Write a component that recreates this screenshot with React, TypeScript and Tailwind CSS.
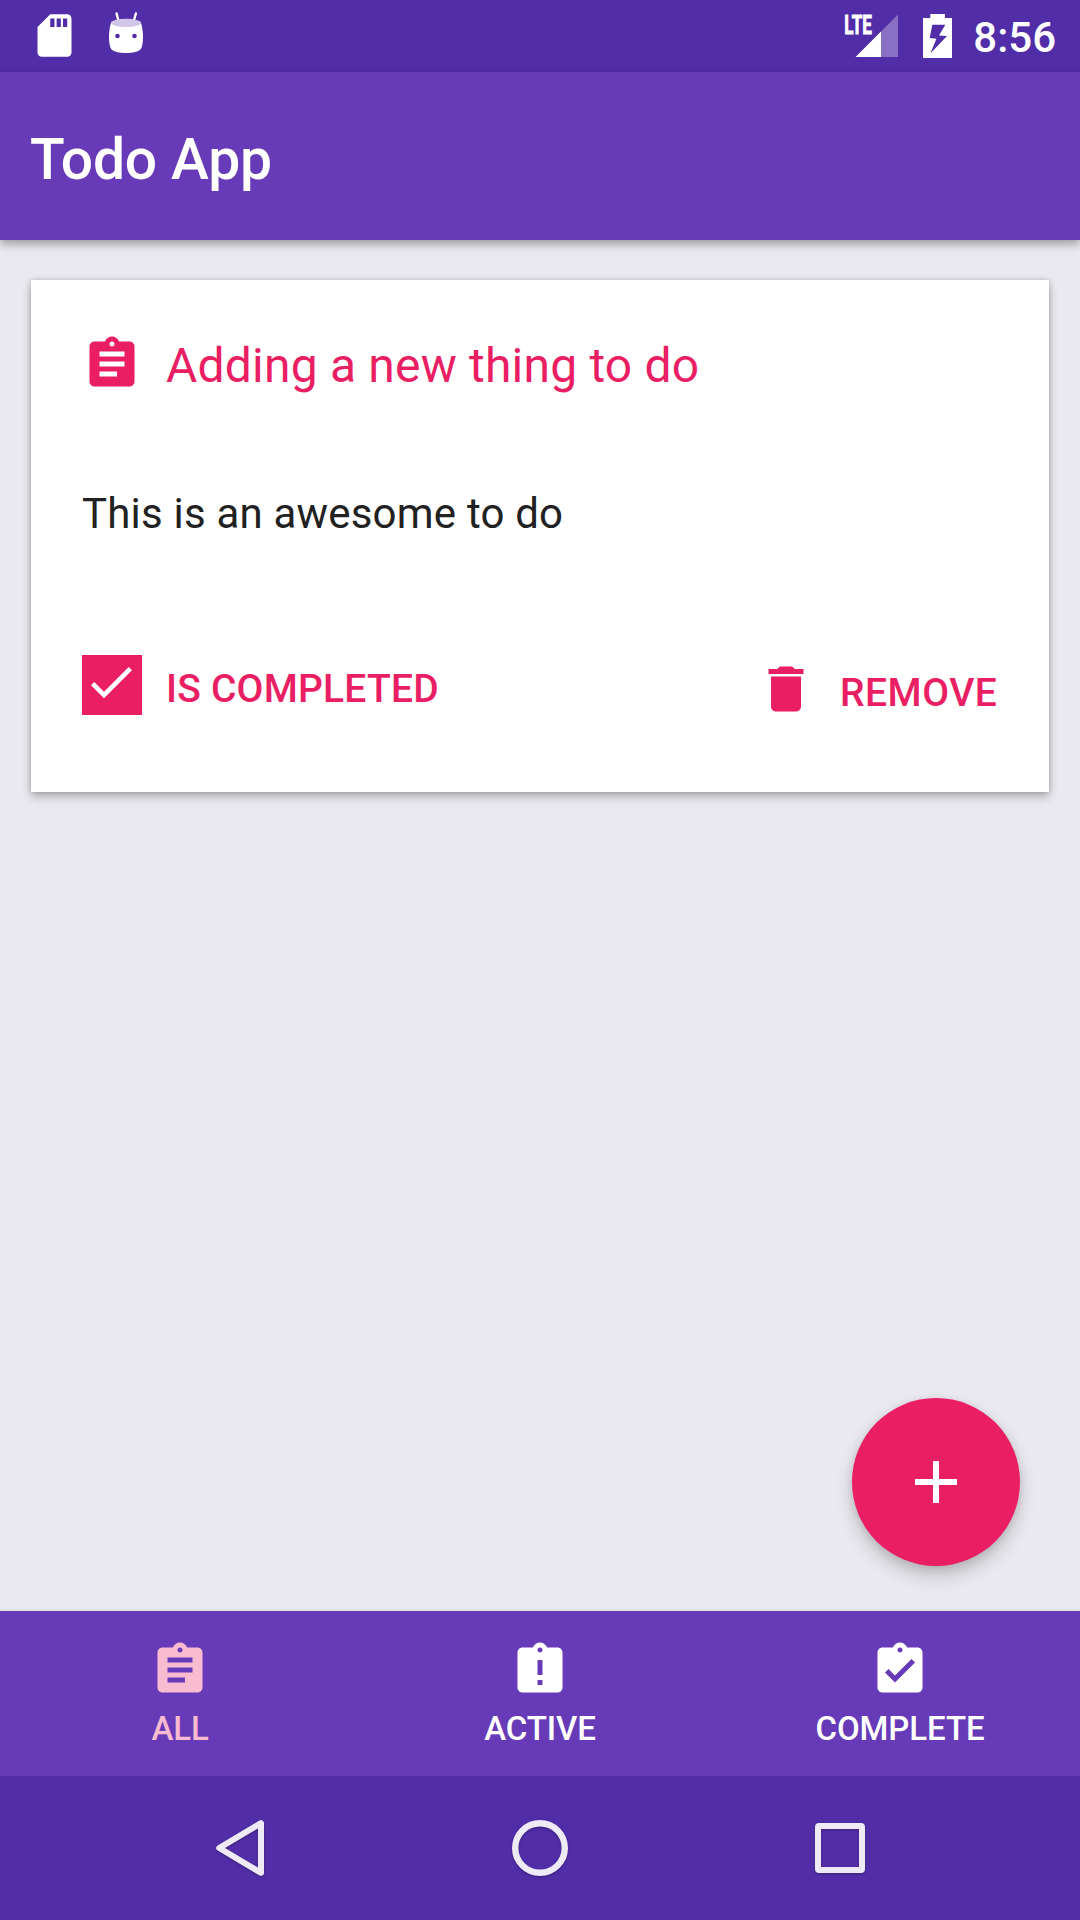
import type { ReactNode } from "react";
import {
  MdAdd,
  MdAssignment,
  MdAssignmentLate,
  MdAssignmentTurnedIn,
  MdCheck,
  MdDelete,
  MdSdStorage,
} from "react-icons/md";

function Bugdroid() {
  return (
    <svg width="36" height="44" viewBox="0 0 36 44" fill="none">
      <path d="M8.6 2.5 10.6 10.5M27.9 2.5 25.6 10.5" stroke="#fff" strokeWidth="2.4" strokeLinecap="round" />
      <path
        d="M3 12C2 15 1 20 1 25.5C1 31 1.7 36 3.2 38C5.5 40.8 11 42 18 42S30.5 40.8 32.8 38C34.3 36 35 31 35 25.5C35 20 34 15 33 12Z"
        fill="#fff"
      />
      <ellipse cx="18" cy="11.8" rx="15.2" ry="4.1" fill="#d1c6e8" />
      <circle cx="9.5" cy="25" r="2.3" fill="#512da8" />
      <circle cx="26.5" cy="25" r="2.3" fill="#512da8" />
    </svg>
  );
}

function Signal() {
  return (
    <svg className="overflow-visible" width="56" height="46" viewBox="0 0 56 46">
      <text
        x="0.3"
        y="21.5"
        fill="#fff"
        stroke="#fff"
        strokeWidth="0.9"
        fontFamily="Roboto, sans-serif"
        fontWeight="700"
        fontSize="25.5"
        textLength="27.5"
        lengthAdjust="spacingAndGlyphs"
      >
        LTE
      </text>
      <path d="M54 2.5V45H37V19.5Z" fill="#fff" fillOpacity="0.32" />
      <path d="M37 19.5V45H11.5Z" fill="#fff" />
    </svg>
  );
}

function Battery() {
  return (
    <svg width="29" height="44" viewBox="0 0 29 44">
      <path
        fillRule="evenodd"
        fill="#fff"
        d="M7.3 0H22V4H29V44H0V4H7.3ZM9.3 10.7 6.7 24 13.4 24.7 7.5 39.3 24 22 16 21.4 22.3 10.7Z"
      />
    </svg>
  );
}

function StatusBar() {
  return (
    <div className="flex h-[72px] shrink-0 items-start justify-between bg-[#512da8] pr-[24px] pl-[28.5px] text-white">
      <div className="flex gap-[28.5px]">
        <MdSdStorage className="mt-[10px] size-[51px]" />
        <div className="mt-[11px]">
          <Bugdroid />
        </div>
      </div>
      <div className="flex">
        <div className="mt-[12px] mr-[23px]">
          <Signal />
        </div>
        <div className="mt-[14px] mr-[21px]">
          <Battery />
        </div>
        <span className="mt-[2px] text-[42px] leading-[72px] font-medium">8:56</span>
      </div>
    </div>
  );
}

function Tab({ icon, label, active }: { icon: ReactNode; label: string; active?: boolean }) {
  return (
    <button
      className={
        active
          ? "flex flex-1 flex-col items-center pt-[29px] text-[#f8bbd0]"
          : "flex flex-1 flex-col items-center pt-[29px] text-white"
      }
    >
      {icon}
      <span className="mt-[9px] text-[33px] leading-[40px] font-medium tracking-[-0.1px]">{label}</span>
    </button>
  );
}

function TodoCard() {
  return (
    <article className="mx-[31px] mt-[40px] flex h-[512px] flex-col bg-white px-[51px] text-[#e91e63] shadow-[0_5px_9px_rgba(0,0,0,0.24),0_0_5px_rgba(0,0,0,0.18)]">
      <div className="mt-[54px] flex h-[60px] items-center gap-6">
        <MdAssignment className="size-[60px]" />
        <h2 className="pt-[4px] text-[48px] leading-[60px] tracking-[0.2px]">Adding a new thing to do</h2>
      </div>
      <p className="mt-[90px] text-[42px] leading-[60px] tracking-[0.2px] text-[#212121]">This is an awesome to do</p>
      <div className="mt-[111px] flex items-start justify-between">
        <button className="flex gap-6">
          <span className="flex size-[60px] items-start justify-start bg-[#e91e63] pl-px text-white">
            <MdCheck className="-mt-px size-[56px]" />
          </span>
          <span className="pt-[4px] text-[39px] leading-[60px] font-medium tracking-[0.2px]">IS COMPLETED</span>
        </button>
        <button className="flex gap-6 pt-[4px]">
          <MdDelete className="size-[60px]" />
          <span className="w-[158px] pt-[4px] text-left text-[39px] leading-[60px] font-medium tracking-[0.5px]">
            REMOVE
          </span>
        </button>
      </div>
    </article>
  );
}

function SystemNav() {
  return (
    <div className="flex h-[144px] shrink-0 items-center justify-center gap-[240px] bg-[#512da8] text-[#eeeaf6]">
      <svg className="drop-shadow-[0_1px_1px_rgba(0,0,0,0.3)]" width="60" height="60" viewBox="0 0 60 60" fill="none">
        <path d="M51 5.2V54.8L9.2 30Z" stroke="currentColor" strokeWidth="6" strokeLinejoin="round" />
      </svg>
      <svg className="drop-shadow-[0_1px_1px_rgba(0,0,0,0.3)]" width="60" height="60" viewBox="0 0 60 60" fill="none">
        <circle cx="30" cy="30" r="24.8" stroke="currentColor" strokeWidth="6.4" />
      </svg>
      <svg className="drop-shadow-[0_1px_1px_rgba(0,0,0,0.3)]" width="60" height="60" viewBox="0 0 60 60" fill="none">
        <path
          fillRule="evenodd"
          fill="currentColor"
          d="M9 5H51Q55 5 55 9V51Q55 55 51 55H9Q5 55 5 51V9Q5 5 9 5ZM11 11V49H49V11Z"
        />
      </svg>
    </div>
  );
}

export default function App() {
  return (
    <div className="flex h-[1920px] w-[1080px] flex-col overflow-hidden bg-[#e9e9ef] font-['Roboto',sans-serif]">
      <StatusBar />
      <header className="flex h-[168px] shrink-0 items-center bg-[#673ab7] pt-[7px] pl-[30px] shadow-[0_4px_9px_rgba(0,0,0,0.34)]">
        <h1 className="text-[57px] leading-[66px] font-medium tracking-[-0.15px] text-white">Todo App</h1>
      </header>
      <main className="relative flex-1">
        <div className="flex flex-col">
          <TodoCard />
        </div>
        <button className="absolute right-[60px] bottom-[45px] flex size-[168px] items-center justify-center rounded-full bg-[#e91e63] text-white shadow-[0_10px_18px_rgba(0,0,0,0.18),0_2px_8px_rgba(0,0,0,0.1)]">
          <MdAdd className="size-[72px]" />
        </button>
      </main>
      <nav className="flex h-[165px] shrink-0 bg-[#673ab7] shadow-[0_-1px_3px_rgba(0,0,0,0.08)]">
        <Tab active icon={<MdAssignment className="size-[60px]" />} label="ALL" />
        <Tab icon={<MdAssignmentLate className="size-[60px]" />} label="ACTIVE" />
        <Tab icon={<MdAssignmentTurnedIn className="size-[60px]" />} label="COMPLETE" />
      </nav>
      <SystemNav />
    </div>
  );
}
